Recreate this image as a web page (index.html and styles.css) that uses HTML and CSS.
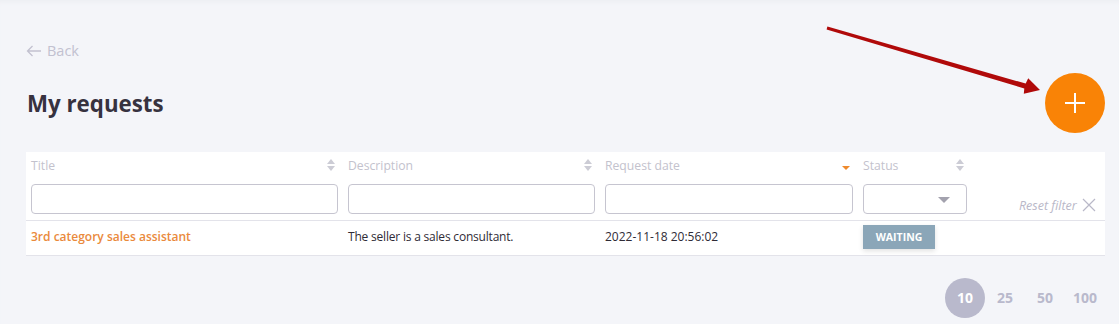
FILE: index.html
```html
<!DOCTYPE html>
<html lang="en">
<head>
  <meta charset="UTF-8">
  <title>My requests</title>
  <link rel="stylesheet" href="styles.css">
</head>
<body>

  <div class="page">
    <a class="back" href="#">
      <svg width="16" height="12" viewBox="0 0 16 12"><path d="M15 6H1.5M6.5 1L1.5 6l5 5" fill="none" stroke="currentColor" stroke-width="1.3"/></svg>
      Back
    </a>

    <div class="page-head">
      <h1>My requests</h1>
      <button class="fab" title="New request">
        <svg width="22" height="22" viewBox="0 0 22 22"><path d="M11 1v20M1 11h20" stroke="#fff" stroke-width="2"/></svg>
      </button>
    </div>

    <table class="grid">
      <thead>
        <tr class="labels">
          <th class="col-title"><span>Title</span><i class="sort"></i></th>
          <th class="col-desc"><span>Description</span><i class="sort"></i></th>
          <th class="col-date"><span>Request date</span><i class="sort desc"></i></th>
          <th class="col-status"><span>Status</span><i class="sort"></i></th>
          <th></th>
        </tr>
        <tr class="filters">
          <td><input type="text"></td>
          <td><input type="text"></td>
          <td><input type="text"></td>
          <td><div class="select"><b></b></div></td>
          <td class="reset">Reset filter
            <svg width="14" height="14" viewBox="0 0 14 14"><path d="M1 1l12 12M13 1L1 13" stroke="currentColor" stroke-width="1.2"/></svg>
          </td>
        </tr>
      </thead>
      <tbody>
        <tr>
          <td><a class="req-link" href="#">3rd category sales assistant</a></td>
          <td class="desc">The seller is a sales consultant.</td>
          <td>2022-11-18 20:56:02</td>
          <td><span class="badge">WAITING</span></td>
          <td></td>
        </tr>
      </tbody>
    </table>

    <div class="pager">
      <span class="active">10</span>
      <span>25</span>
      <span>50</span>
      <span>100</span>
    </div>
  </div>

  <svg class="pointer" width="1119" height="324" viewBox="0 0 1119 324">
    <polygon points="827.4,26.6 1025.7,83.6 1028.2,78.3 1040,90 1023.8,93.7 1024.3,88.4 826.6,29.4" fill="#b00a0a"/>
  </svg>

</body>
</html>
```

FILE: styles.css
```css
body {
  margin: 0;
  background-color: #f4f5f9;
  font-family: 'Open Sans', sans-serif;
  color: #35313d;
  box-shadow: inset 0 5px 4px -3px #eceef2;
  min-height: 324px;
}

.page {
  padding: 40px 14px 0 26px;
}

.back {
  display: inline-flex;
  align-items: center;
  gap: 5px;
  color: #c2c1d0;
  font-size: 14.5px;
  text-decoration: none;
  line-height: 20px;
}

.page-head {
  display: flex;
  justify-content: space-between;
  align-items: center;
  margin-top: 11px;
}

.page-head h1 {
  margin: 0 0 0 1px;
  font-size: 22.3px;
  font-weight: 700;
  color: #37323f;
}

.fab {
  width: 60px;
  height: 60px;
  border-radius: 50%;
  border: none;
  background-color: #f98306;
  display: flex;
  align-items: center;
  justify-content: center;
  padding: 0;
  cursor: pointer;
}

.grid {
  margin-top: 19px;
  width: 100%;
  border-collapse: collapse;
  background-color: #fff;
  font-size: 12px;
}

.grid th {
  text-align: left;
  font-weight: 400;
  font-size: 12.2px;
  color: #c3c2cd;
  padding: 4px 5px 0;
  height: 23px;
  vertical-align: top;
}

.grid th span {
  display: inline-block;
  margin-top: 1px;
}

.col-title { width: 307px; }
.col-desc { width: 247px; }
.col-date { width: 248px; }
.col-status { width: 104px; }

.grid th .sort {
  float: right;
  position: relative;
  width: 9px;
  height: 12px;
  margin: 3px 2px 0 0;
}

.sort::before,
.sort::after {
  content: "";
  position: absolute;
  left: 0;
  border-left: 4.5px solid transparent;
  border-right: 4.5px solid transparent;
}

.sort::before {
  top: 0;
  border-bottom: 5px solid #ccccd5;
}

.sort::after {
  bottom: 0;
  border-top: 5px solid #ccccd5;
}

.sort.desc::before {
  display: none;
}

.sort.desc::after {
  bottom: 1px;
  border-left-width: 4px;
  border-right-width: 4px;
  border-top: 4px solid #ef8a2c;
}

.filters td {
  padding: 5px 5px 6px;
  border-bottom: 1px solid #e3e3ea;
  vertical-align: bottom;
}

.filters input,
.select {
  box-sizing: border-box;
  width: 100%;
  height: 30px;
  border: 1px solid #c6c5d0;
  border-radius: 4px;
  background: #fff;
  display: block;
  margin: 0;
}

.select {
  position: relative;
}

.select b {
  position: absolute;
  right: 16px;
  top: 12px;
  border-left: 6px solid transparent;
  border-right: 6px solid transparent;
  border-top: 6px solid #a3a2ae;
}

.reset {
  text-align: right;
  font-style: italic;
  font-size: 12.5px;
  color: #b9b8c8;
  white-space: nowrap;
  padding-right: 9px !important;
}

.reset svg {
  vertical-align: -2px;
  margin-left: 2px;
}

.grid tbody td {
  padding: 3px 5px 7px;
  height: 24px;
  border-bottom: 1px solid #e3e3ea;
  color: #2f2b36;
}

.grid tbody td.desc {
  letter-spacing: -0.2px;
}

.req-link {
  color: #ea8a3c;
  font-weight: 600;
  text-decoration: none;
}

.badge {
  display: inline-block;
  width: 72px;
  height: 24px;
  line-height: 24px;
  text-align: center;
  background-color: #8ba6b8;
  color: #fff;
  font-size: 10.5px;
  font-weight: 700;
  box-shadow: 0 2px 5px rgba(0, 0, 0, 0.12);
  vertical-align: middle;
  position: relative;
  top: 1px;
}

.pager {
  display: flex;
  justify-content: flex-end;
  margin-top: 22px;
}

.pager span {
  width: 40px;
  height: 40px;
  line-height: 40px;
  text-align: center;
  font-size: 14px;
  font-weight: 700;
  color: #b9b9cc;
}

.pager .active {
  border-radius: 50%;
  background-color: #b9b9cc;
  color: #fff;
}

.pointer {
  position: absolute;
  top: 0;
  left: 0;
  pointer-events: none;
}
```
